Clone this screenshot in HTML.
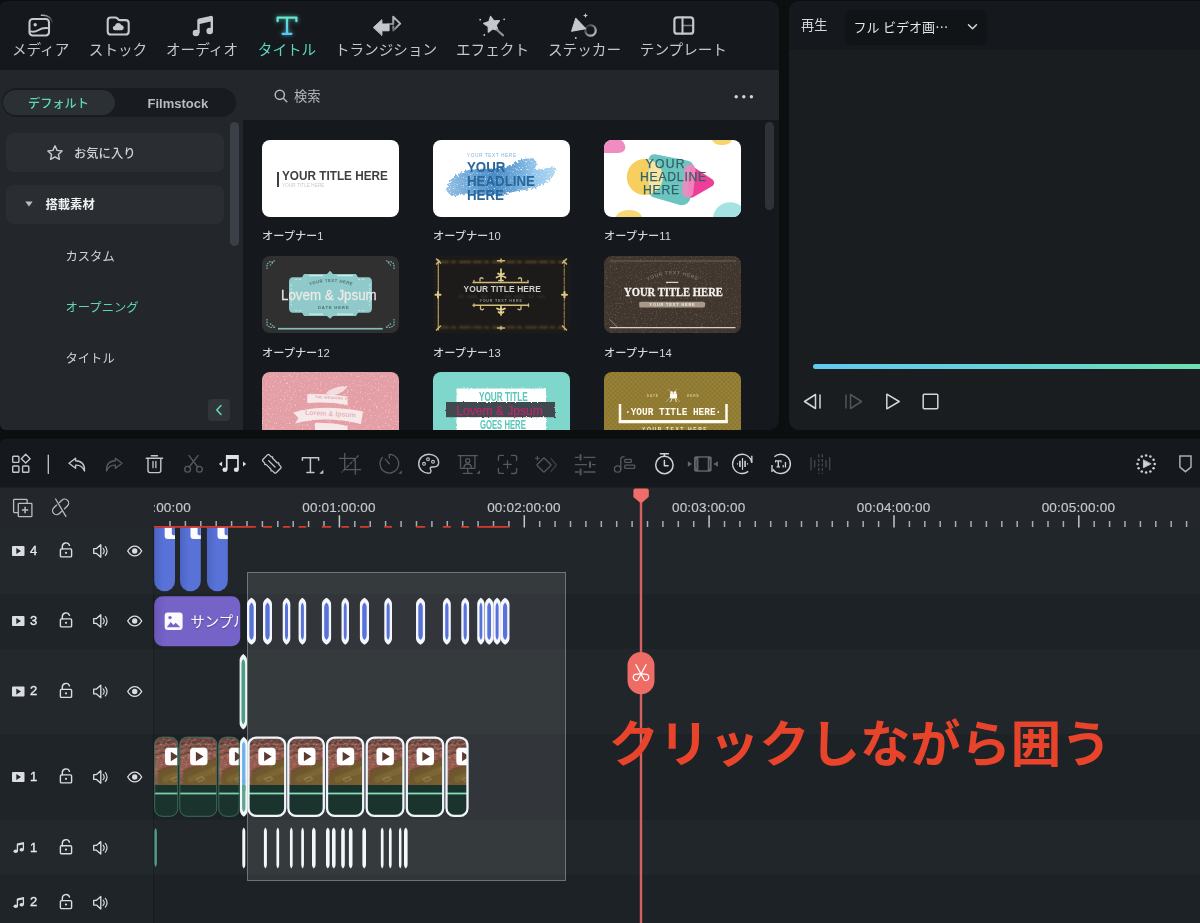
<!DOCTYPE html>
<html lang="ja">
<head>
<meta charset="utf-8">
<title>Filmora</title>
<style>
*{box-sizing:border-box;margin:0;padding:0}
html,body{width:1200px;height:923px;overflow:hidden;background:#0c0e10}
body{position:relative;font-family:"Liberation Sans","Noto Sans CJK JP",sans-serif;color:#c9cbce;-webkit-font-smoothing:antialiased}
.abs{position:absolute}
svg{position:absolute;overflow:visible}
/* ---------- top-left panel ---------- */
#lib{will-change:transform;position:absolute;left:0;top:1px;width:779px;height:429px;background:#15181c;border-radius:6px 10px 10px 6px;overflow:hidden}
#tabs{position:absolute;left:0;top:0;width:779px;height:68.5px;background:#15181c}
.tab{position:absolute;top:40px;height:18px;line-height:18px;font-size:14.6px;color:#c6c8cc;white-space:nowrap;transform:translateX(-50%)}
.tab.on{color:#5fd6c0}
#strip{position:absolute;left:0;top:68.5px;width:779px;height:50.5px;background:#23272b}
#side{position:absolute;left:0;top:119px;width:243px;height:310px;background:#23272b}
#seg{position:absolute;left:2px;top:87px;width:234px;height:29px;border-radius:15px;background:#181b1f}
#segon{position:absolute;left:3px;top:89px;width:112px;height:25px;border-radius:13px;background:#2b3035}
.sbtn{position:absolute;left:6px;width:218px;height:39px;border-radius:8px;background:#2a2e33}
.stext{position:absolute;font-size:12.3px;line-height:16px;height:16px;white-space:nowrap}
.lbl{position:absolute;font-weight:500;font-size:11.2px;line-height:14px;height:14px;color:#d4d6d9;white-space:nowrap}
.th{position:absolute;width:137px;height:77px;border-radius:8px;overflow:hidden}
/* ---------- preview panel ---------- */
#prev{will-change:transform;position:absolute;left:789px;top:1px;width:420px;height:429px;background:#1a1d20;border-radius:10px;overflow:hidden}
#prevhead{position:absolute;left:0;top:0;width:420px;height:49px;background:#15181c}
/* ---------- toolbar ---------- */
#tool{will-change:transform;position:absolute;left:0;top:438px;width:1200px;height:50px}
/* ---------- timeline ---------- */
#tl{will-change:transform;position:absolute;left:0;top:487px;width:1200px;height:436px;background:#23272b;overflow:hidden}
.row{position:absolute;left:0;width:1200px}
.rl{background:#22282b}.rd{background:#1f2428}
.tnum{position:absolute;left:30px;font-size:13px;line-height:16px;height:16px;color:#e8e9ea;font-weight:normal;-webkit-text-stroke:.35px #e8e9ea}
.rul{position:absolute;top:12.600px;font-size:13.500px;line-height:16px;height:16px;color:#c6c9cd;white-space:nowrap;letter-spacing:.2px;transform:translateX(-50%);-webkit-text-stroke:.15px #c6c9cd}
</style>
</head>
<body>

<!-- ================= LIBRARY PANEL ================= -->
<div id="lib">
  <div id="tabs">
    <div class="tab" style="left:40.6px">メディア</div>
    <div class="tab" style="left:118px">ストック</div>
    <div class="tab" style="left:202px">オーディオ</div>
    <div class="tab on" style="left:287px">タイトル</div>
    <div class="tab" style="left:386px">トランジション</div>
    <div class="tab" style="left:492.5px">エフェクト</div>
    <div class="tab" style="left:584.5px">ステッカー</div>
    <div class="tab" style="left:683.4px">テンプレート</div>
    <!--TI-START-->
<svg style="left:0;top:0" width="779" height="69" viewBox="0 1 779 69" fill="none" stroke-linecap="round" stroke-linejoin="round">
<defs>
<linearGradient id="tg" x1="0" y1="0" x2="0" y2="1"><stop offset="0" stop-color="#62e6cc"/><stop offset="1" stop-color="#5cc4fa"/></linearGradient>
<linearGradient id="fa1" x1="1" y1="0" x2="0" y2="1"><stop offset="0" stop-color="#c6c8ce"/><stop offset=".55" stop-color="#c6c8ce" stop-opacity=".75"/><stop offset="1" stop-color="#c6c8ce" stop-opacity=".15"/></linearGradient>
<linearGradient id="fa2" x1="1" y1="1" x2="0" y2="0"><stop offset="0" stop-color="#c6c8ce"/><stop offset=".5" stop-color="#c6c8ce" stop-opacity=".6"/><stop offset="1" stop-color="#c6c8ce" stop-opacity=".05"/></linearGradient>
<linearGradient id="fa3" x1="0" y1="0" x2="1" y2="1"><stop offset="0" stop-color="#c6c8ce" stop-opacity=".9"/><stop offset="1" stop-color="#c6c8ce" stop-opacity="0"/></linearGradient>
<filter id="glow" x="-50%" y="-50%" width="200%" height="200%"><feGaussianBlur stdDeviation="2.200"/></filter>
</defs>
<rect x="29.500" y="19" width="19.500" height="16.500" rx="3.200" stroke="#c6c8ce" stroke-width="2.100"/>
<circle cx="35.200" cy="24.700" r="1.700" fill="#c6c8ce"/>
<path d="M30.500 31.400c3.400.9 5.400.3 7.700-1.200 2.600-1.700 5.400-2.700 10-2.100" stroke="#c6c8ce" stroke-width="1.900"/>
<path d="M41.500 15.300c5.600-.6 10.700 2.200 11 9.300" stroke="url(#fa3)" stroke-width="1.600"/>
<path d="M110.800 17.500h4.300c1.100 0 1.700.3 2.400 1l.9.900c.5.500 1 .7 1.800.7h5.400c1.900 0 3.100 1.200 3.100 3.100v8.200c0 1.900-1.200 3.100-3.100 3.100h-14.800c-1.900 0-3.100-1.200-3.100-3.100V20.600c0-1.900 1.200-3.100 3.100-3.100z" stroke="#c6c8ce" stroke-width="2.100"/>
<path d="M115.200 30.300a2.300 2.300 0 0 1-.2-4.600 3.300 3.300 0 0 1 6.300-.7 2.700 2.700 0 0 1 .5 5.300z" fill="#c6c8ce"/>
<g fill="#c6c8ce"><circle cx="196" cy="33" r="3.300"/><circle cx="209.700" cy="31" r="3.300"/><path d="M197.300 20.500c0-1.100.6-1.900 1.700-2.100l11.600-2.500c1.300-.3 2.400.6 2.400 1.900V31h-2.400V21.600l-10.900 2.400V33h-2.400z"/></g>
<path d="M277.600 21.200v-3.600h18.800v3.600M287 17.600v16.100M282.600 33.800h8.800" stroke="#5fe0d8" stroke-width="3" filter="url(#glow)" opacity=".55"/>
<path d="M277.600 21.200v-3.600h18.800v3.600M287 17.600v16.100M282.600 33.800h8.800" stroke="url(#tg)" stroke-width="2.300"/>
<path d="M373.600 27.300l8.300-7.600v4.300h7.200v6.800h-7.200v4.300z" fill="#c6c8ce" stroke="#c6c8ce" stroke-width="1" />
<path d="M388.500 24l4.700 0v-7.300l7 6.900-7 6.900v-4" stroke="url(#fa1)" stroke-width="2"/>
<path d="M490.54 16.33L493.88 20.74L499.42 20.66L496.26 25.20L498.04 30.44L492.75 28.83L488.32 32.15L488.20 26.62L483.68 23.43L488.91 21.61z" fill="#c6c8ce" stroke="#c6c8ce" stroke-width="1.200"/>
<path d="M496.800 29.800l6.300 5.600" stroke="#8f9298" stroke-width="2.100"/>
<g fill="#c6c8ce"><circle cx="480.200" cy="19.700" r=".9"/><circle cx="504.200" cy="19.300" r=".9"/><circle cx="484.300" cy="35" r=".9"/></g>
<path d="M575.800 18.400l-4.100 12.800 13.900-2.500z" fill="#c6c8ce" stroke="#c6c8ce" stroke-width="1.200"/>
<circle cx="590.500" cy="30.400" r="5.200" stroke="url(#fa2)" stroke-width="2.300"/>
<path d="M585.500 13l.7 1.800 1.800.7-1.800.7-.7 1.800-.7-1.800-1.800-.7 1.800-.7z" fill="#c6c8ce"/><circle cx="575.800" cy="38" r=".9" fill="#c6c8ce"/>
<rect x="674.400" y="17.400" width="18.800" height="16.300" rx="2.800" stroke="#c6c8ce" stroke-width="2.200"/><path d="M682.500 17.400v16.300" stroke="#c6c8ce" stroke-width="2"/><path d="M682.500 25.500h10.700" stroke="#c6c8ce" stroke-width="1.600" opacity=".6"/>
</svg>
<!--TI-END-->
  </div>
  <div id="strip"></div>
  <div id="side"></div>
  <div id="seg"></div><div id="segon"></div>
  <div class="stext" style="left:28px;top:95px;color:#5fd6b4;font-weight:500;font-size:12.2px">デフォルト</div>
  <div class="stext" style="left:147.5px;top:95px;color:#b9bcc0;font-weight:bold;font-size:13px">Filmstock</div>
  <div class="stext" style="left:294px;top:87.5px;color:#b4b7bb;font-size:13.3px">検索</div>
  
  <!-- search icon -->
  <svg style="left:274px;top:88px" width="14" height="14" viewBox="0 0 14 14" fill="none" stroke="#b4b7bb" stroke-width="1.5" stroke-linecap="round"><circle cx="5.8" cy="5.8" r="4.6"/><path d="M9.3 9.3L12.8 12.8"/></svg>
  <!-- more dots -->
  <svg style="left:733px;top:92px" width="22" height="8" viewBox="0 0 22 8" fill="#d2d4d7"><circle cx="3.2" cy="3.8" r="1.7"/><circle cx="10.8" cy="3.8" r="1.7"/><circle cx="18.4" cy="3.8" r="1.7"/></svg>
  <!-- sidebar scroll -->
  <div class="abs" style="left:230px;top:121px;width:9px;height:124px;border-radius:5px;background:#3b4048"></div>
  <div class="sbtn" style="top:132px"></div>
  <svg style="left:46px;top:143px" width="18" height="18" viewBox="0 0 18 18" fill="none" stroke="#c9cbce" stroke-width="1.4" stroke-linejoin="round"><path d="M9 1.8l2.1 4.6 5 .6-3.7 3.4 1 4.9L9 12.8l-4.4 2.5 1-4.9L1.9 7l5-.6z"/></svg>
  <div class="stext" style="left:74px;top:145px;color:#cfd1d4;font-weight:500">お気に入り</div>
  <div class="sbtn" style="top:184px"></div>
  <svg style="left:25px;top:200px" width="8" height="6" viewBox="0 0 8 6" fill="#b9bcc0"><path d="M0.3 0.5h7.4L4 5.6z"/></svg>
  <div class="stext" style="left:45.5px;top:196px;color:#f0f1f2;font-weight:bold">搭載素材</div>
  <div class="stext" style="left:65.5px;top:248px;color:#d0d2d5">カスタム</div>
  <div class="stext" style="left:65.5px;top:299px;color:#5fd6b4">オープニング</div>
  <div class="stext" style="left:65.5px;top:350px;color:#d0d2d5">タイトル</div>
  <div class="abs" style="left:208px;top:398px;width:22px;height:22px;border-radius:4px;background:#30353a"></div>
  <svg style="left:214px;top:403px" width="10" height="12" viewBox="0 0 10 12" fill="none" stroke="#5fd6b4" stroke-width="1.6" stroke-linecap="round" stroke-linejoin="round"><path d="M7 1.5L2.8 6 7 10.5"/></svg>
  <!-- content scroll -->
  <div class="abs" style="left:765px;top:121px;width:9px;height:88px;border-radius:5px;background:#2f3338"></div>
  <!--SIDEBAR-->
  
  <!-- ===== row 1 ===== -->
  <div class="th" style="left:262px;top:138.5px;background:#fff">
    <div class="abs" style="left:15px;top:32px;width:2px;height:15px;background:#3e3e3e"></div>
    <div class="abs" id="t1a" style="left:20px;top:28px;font-size:13.4px;line-height:16px;font-weight:bold;color:#3f3f3f;white-space:nowrap;transform-origin:0 0;transform:scaleX(.879)">YOUR TITLE HERE</div>
    <div class="abs" style="left:20px;top:43.5px;font-size:4.6px;line-height:6px;color:#c9c9c9;white-space:nowrap;letter-spacing:.1px">YOUR TITLE HERE</div>
  </div>
  <div class="lbl" style="left:262px;top:228px">オープナー1</div>

  <div class="th" style="left:433px;top:138.5px;background:#fff">
    <svg style="left:0;top:0" width="137" height="77" viewBox="0 0 137 77">
      <defs><linearGradient id="br" gradientUnits="userSpaceOnUse" x1="14" y1="0" x2="124" y2="0"><stop offset="0" stop-color="#93c0e4"/><stop offset=".22" stop-color="#6da6d6"/><stop offset=".42" stop-color="#4a8cc6"/><stop offset=".62" stop-color="#6aa6d8"/><stop offset=".8" stop-color="#94c6ec"/><stop offset="1" stop-color="#b4d8f2"/></linearGradient>
      <filter id="rg" x="-5%" y="-10%" width="110%" height="120%"><feTurbulence type="fractalNoise" baseFrequency=".5" numOctaves="2" seed="3" result="n"/><feDisplacementMap in="SourceGraphic" in2="n" scale="4.500" result="d"/><feTurbulence type="fractalNoise" baseFrequency=".75" numOctaves="2" seed="12" result="m"/><feColorMatrix in="m" values="0 0 0 0 0 0 0 0 0 0 0 0 0 0 0 0 0 0 4.500 -2.850" result="h"/><feComposite in="d" in2="h" operator="out"/></filter></defs>
      <path filter="url(#rg)" fill="url(#br)" d="M14 48c1-5 3-8 7-11 4-4 9-6 15-7 6-1 12-1 19-1.500 6 0 12-.5 17-1.500 5-1 9-4 13.600-6 4-2 9-3 13.400-2.700 3 1 4.600 2.700 4.600 4.700 0 2.300-1.600 4.600-1.600 6.600 3 .5 7-.5 10-1.100 3-.6 7-1 11-1.500-.5 4-1.500 7.600-4 10.600-4 4-9 7-14.400 9.400-6 2-13 3-20 4-6 1-11 3-16 4-6 .5-13 0-19.600-.5-5-.5-10-.4-15-.9-4-.3-9 2.600-13.400 2.700-4-.9-7-4.300-7.600-8.300z"/>
    </svg>
    <div class="abs" style="left:34px;top:13.5px;font-size:4.8px;line-height:6px;color:#86b4dc;white-space:nowrap;letter-spacing:.55px">YOUR TEXT HERE</div>
    <div class="abs" style="left:34px;top:20.5px;font-size:14px;line-height:14px;font-weight:bold;color:#27679c;white-space:nowrap;transform-origin:0 0;transform:scaleX(.95)">YOUR<br>HEADLINE<br>HERE</div>
  </div>
  <div class="lbl" style="left:433px;top:228px">オープナー10</div>

  <div class="th" style="left:604px;top:138.5px;background:#fff">
    <svg style="left:0;top:0" width="137" height="77" viewBox="0 0 137 77">
      <path fill="#f08cc0" d="M0 0h17c3 2 5 6 4 9-1 3-4 4-8 4H0z"/>
      <path fill="#f7d56e" d="M108 0h20c-1 3-5 5-10 5s-9-2-10-5z"/>
      <path fill="#f7d872" d="M12 77c1-4 6-7 13-7s12 3 13 7z"/>
      <path fill="#a5e3e3" d="M109 77c1-6 5-12 12-14 6-2 12 0 16 3v11z"/>
      <circle cx="40.800" cy="37" r="18" fill="#f6cf5e"/>
      <clipPath id="tb"><path d="M51 14.300L83 20.500Q90 22 90.500 29L86.500 58Q84.500 66 76 65L50 57.500Q44.500 55.500 44.500 49V22Q44.500 13.500 51 14.300z"/></clipPath>
      <path fill="#6cc4c0" d="M51 14.300L83 20.500Q90 22 90.500 29L86.500 58Q84.500 66 76 65L50 57.500Q44.500 55.500 44.500 49V22Q44.500 13.500 51 14.300z"/>
      <circle cx="40.800" cy="37" r="18" fill="#f7e3a2" clip-path="url(#tb)"/>
      <path fill="#ee3f98" d="M90 27.300L108.500 39.500Q112 43 108.500 46L89.500 57Q85.500 59 84.500 55Q82.500 41 85.500 29.500Q87 25.500 90 27.300z"/>
      <rect x="79" y="24.500" width="11.500" height="33" rx="5.500" fill="#f08cc0" opacity=".88" transform="rotate(6 85 41)"/>
    </svg>
    <div class="abs" style="left:36px;top:18.5px;font-size:12.2px;line-height:13px;color:#2f6365;-webkit-text-stroke:.25px #2f6365;white-space:nowrap;letter-spacing:.75px"><span style="margin-left:5.500px;letter-spacing:1.300px">YOUR</span><br>HEADLINE<br><span style="margin-left:3px">HERE</span></div>
  </div>
  <div class="lbl" style="left:604px;top:228px">オープナー11</div>

  <!-- ===== row 2 ===== -->
  <div class="th" style="left:262px;top:254.8px;background:#303030">
    <svg style="left:0;top:0" width="137" height="77" viewBox="0 0 137 77">
      <defs><filter id="pl" x="-5%" y="-5%" width="110%" height="110%"><feTurbulence type="fractalNoise" baseFrequency=".9" numOctaves="1" seed="2"/><feDisplacementMap in="SourceGraphic" scale="1.300"/></filter></defs>
      <path filter="url(#pl)" fill="#8fc9c9" d="M68 14.700L71 18H94L96 21.300H106Q110 21.300 110 26V52Q110 56.700 106 56.700H96L94 60H71L68 62.700 65 60H42L40 56.700H31Q27 56.700 27 52V26Q27 21.300 31 21.300H40L42 18H65z"/>
      <path stroke="#c9eded" stroke-width="1.200" fill="none" d="M47 19.700H61M75 19.700H91M47 58.200H61M75 58.200H91"/>
      <path stroke="#c2e8e8" stroke-width="1" stroke-dasharray="2.500 1.500" fill="none" d="M29.200 28V50M107.800 28V50M33 23.300H40M96 23.300H104M33 54.700H40M96 54.700H104"/>
      <path stroke="#9fd3d3" stroke-width="1" d="M16 72.400H120.700"/><path stroke="#6fa3a3" stroke-width=".9" d="M16 73.300H120.700"/>
      <g fill="none" stroke="#7fbcbc" stroke-width="1.100" stroke-dasharray="1.600 1"><path d="M5 13V8l3-2.500 4 1M8 9.500l5-5.500M132 13V8l-3-2.500-4 1M129 9.500l-5-5.500M5 63v6l3 2.500 5-.5M8 67.500l5 4M132 63v6l-3 2.500-5-.5M129 67.500l-5 4"/></g>
      <path id="arc12" fill="none" d="M46.500 30Q69 21.600 92.500 30.400"/>
      <text font-size="4.300" font-weight="bold" fill="#4d7474" letter-spacing=".42" font-family="Liberation Sans,sans-serif"><textPath href="#arc12" startOffset="1.200">YOUR TEXT HERE</textPath></text>
    </svg>
    <div class="abs" style="left:19px;top:30.200px;font-size:14.6px;line-height:18px;color:rgba(240,236,232,.93);white-space:nowrap;letter-spacing:0;transform-origin:0 0;transform:scaleX(.915);-webkit-text-stroke:.3px rgba(240,236,232,.9)">Lovem &amp; Jpsum</div>
    <div class="abs" style="left:56px;top:49.700px;font-size:4.300px;line-height:6px;color:#4d7474;white-space:nowrap;letter-spacing:.75px;font-weight:bold">DATE HERE</div>
  </div>
  <div class="lbl" style="left:262px;top:345px">オープナー12</div>

  <div class="th" style="left:433px;top:254.8px;background:#1d1b19">
    <svg style="left:0;top:0" width="137" height="77" viewBox="0 0 137 77">
      <defs><filter id="gd" filterUnits="userSpaceOnUse" x="0" y="0" width="137" height="77"><feTurbulence type="fractalNoise" baseFrequency=".9" numOctaves="1" seed="8"/><feDisplacementMap in="SourceGraphic" scale="1.500"/></filter>
      <filter id="gb2" filterUnits="userSpaceOnUse" x="0" y="0" width="137" height="77"><feGaussianBlur stdDeviation=".8"/></filter></defs>
      <g fill="none" filter="url(#gb2)" stroke="#5a4a2a" stroke-width="1.800" stroke-dasharray="9 2 5 3 12 2"><path d="M7 6H130M7 71.300H130"/></g>
      <path d="M25 40.600H58M72 40.600H112" stroke="#3a352c" stroke-width="1.300" filter="url(#gb2)" stroke-dasharray="6 3 10 4"/>
      <g filter="url(#gd)" fill="none" stroke-linecap="round">
        <path stroke="#a8955a" stroke-width="1.300" stroke-dasharray="5 1 2 1" d="M5.300 4V74"/>
        <path stroke="#8a7a4a" stroke-width="1.200" stroke-dasharray="4 1 2 1.500" d="M131.300 4V74"/>
        <path stroke="#d2bd7a" stroke-width="1.400" d="M40 26.500H95M40 49.300H95.500"/>
        <path stroke="#e2d08e" stroke-width="1.700" d="M68 13v4M65 17.500q3 2.500 6 0M63.500 21.500q4.500-3 9 0M66 24.500h4M68 17v8M68 50v9M64 52.500q4 2.500 8 0M65.500 56q2.500 2 5 0"/>
        <path stroke="#cdb977" stroke-width="1.300" d="M47 25v-2.500q1.500-1.500 3 0M88.500 25v-2.500q-1.500-1.500-3 0M47.500 50.500v2.500q1.500 1.500 3 0M88 50.500v2.500q-1.500 1.500-3 0M41 24.500v2M95 24.500v2M41 48v2.500M95.500 48v2.500"/>
        <path stroke="#dcc985" stroke-width="2" d="M2.500 38.700h5M5 36v5.500M129 38.700h5M131.500 36v5.500"/>
        <path stroke="#cdb977" stroke-width="1.500" d="M3.500 3l4 4M3.500 8l3-3M133.500 3l-4 4M133.500 8l-3-3M3.500 74l4-4M133.500 74l-4-4M64.500 4.700h7M68 3v3M64.500 72h7M68 70.500v3"/>
      </g>
    </svg>
    <div class="abs" style="left:30.500px;top:28px;font-size:8.400px;line-height:11px;font-weight:bold;color:#cfcfcf;white-space:nowrap;letter-spacing:.14px">YOUR TITLE HERE</div>
    <div class="abs" style="left:46.400px;top:42.400px;font-size:3.700px;line-height:6px;color:#8c8c86;white-space:nowrap;letter-spacing:.78px;font-weight:bold">YOUR TEXT HERE</div>
  </div>
  <div class="lbl" style="left:433px;top:345px">オープナー13</div>

  <div class="th" style="left:604px;top:254.8px;background:#41362d">
    <svg style="left:0;top:0" width="137" height="77" viewBox="0 0 137 77">
      <defs><filter id="sp" x="0" y="0" width="1" height="1"><feTurbulence type="fractalNoise" baseFrequency=".8" numOctaves="2" seed="5"/><feColorMatrix values="0 0 0 0 .62  0 0 0 0 .55  0 0 0 0 .48  0 0 0 3.200 -1.820"/></filter></defs>
      <rect width="137" height="77" filter="url(#sp)" opacity=".3"/>
      <path stroke="#7a6d62" stroke-width=".8" d="M5.600 5H132"/>
      <path stroke="#d6cec5" stroke-width="1.300" d="M5.600 71.700H131.500"/><path stroke="#9c9187" stroke-width=".9" d="M5.600 63.300l8 8"/>
      <path stroke="#d9d0c6" stroke-width="1.300" d="M61.900 26.300h12.400"/>
      <rect x="35.200" y="45.700" width="65.800" height="5.900" rx="1.600" fill="#a8988a"/>
      <path id="arc14" fill="none" d="M41.500 26q27.500-15 55 0"/>
      <text font-size="5" font-weight="bold" fill="#7d6e60" letter-spacing=".62" font-family="Liberation Sans,sans-serif"><textPath href="#arc14" startOffset="2">YOUR TEXT HERE</textPath></text>
    </svg>
    <div class="abs" style="left:20.300px;top:28.700px;font-family:'Liberation Serif',serif;font-size:13.400px;line-height:16px;font-weight:bold;color:#f6f3ee;white-space:nowrap;transform-origin:0 0;transform:scaleX(.793);-webkit-text-stroke:.3px #f6f3ee">YOUR TITLE HERE</div>
    <div class="abs" style="left:45.600px;top:46.900px;font-size:3.800px;line-height:5.500px;color:#f0eae2;white-space:nowrap;letter-spacing:.9px;font-weight:bold">YOUR TEXT HERE</div>
  </div>
  <div class="lbl" style="left:604px;top:345px">オープナー14</div>

  <!-- ===== row 3 ===== -->
  <div class="th" style="left:262px;top:370.9px;background:#e39fa5">
    <svg style="left:0;top:0" width="137" height="77" viewBox="0 0 137 77">
      <defs><filter id="sp2" x="0" y="0" width="1" height="1"><feTurbulence type="fractalNoise" baseFrequency=".55" numOctaves="2" seed="11"/><feColorMatrix values="0 0 0 0 1  0 0 0 0 .93  0 0 0 0 .93  0 0 0 3.500 -2.080"/></filter>
      <filter id="rg3" filterUnits="userSpaceOnUse" x="0" y="0" width="137" height="77"><feTurbulence type="fractalNoise" baseFrequency=".7" numOctaves="2" seed="4"/><feDisplacementMap in="SourceGraphic" scale="1.800"/></filter></defs>
      <rect width="137" height="77" filter="url(#sp2)" opacity=".6"/>
      <g filter="url(#rg3)" fill="#f7e8e9">
        <path d="M64 21.500c4-5 12-7.500 21.500-7.500-2 4-6 7-11 8.500-4 1-8 .5-10.500-1z" opacity=".85"/>
        <path d="M45.300 22.300Q66 21 85.600 24.500V33Q66 29.500 45.300 31z"/>
        <path d="M31.200 40.500Q60 31.500 101 39.500L99 52Q62 43.500 33 51.500L36.500 46z"/>
        <path d="M53 50.800Q70 50.500 85.600 54V62.500Q70 59 53 59.300z"/>
      </g>
    </svg>
    <div class="abs" style="left:53px;top:24.200px;font-size:3.500px;line-height:5px;color:#dba0a6;white-space:nowrap;letter-spacing:.32px;font-weight:bold;transform:rotate(3deg)">THE WEDDING OF</div>
    <div class="abs" style="left:43px;top:36.700px;font-size:7px;line-height:9px;color:#e6b4b9;white-space:nowrap;font-weight:bold;transform:rotate(3deg)">Lorem &amp; Ipsum</div>
  </div>

  <div class="th" style="left:433px;top:370.9px;background:#7fd6ca">
    <svg style="left:0;top:0" width="137" height="77" viewBox="0 0 137 77">
      <defs><filter id="rg2" filterUnits="userSpaceOnUse" x="0" y="0" width="137" height="77"><feTurbulence type="fractalNoise" baseFrequency=".6" numOctaves="2" seed="6"/><feDisplacementMap in="SourceGraphic" scale="2.600"/></filter>
      <pattern id="dots" width="2" height="2" patternUnits="userSpaceOnUse"><rect width="2" height="2" fill="#3c464c"/><circle cx="1" cy="1" r=".45" fill="#5b666c"/></pattern></defs>
      <g filter="url(#rg2)"><rect x="23.500" y="16.500" width="89.500" height="14" fill="#fdfefe"/><rect x="23.500" y="45" width="89.500" height="16" fill="#fdfefe"/><rect x="13" y="30" width="109" height="15.200" fill="url(#dots)"/></g>
    </svg>
    <div class="abs" style="left:45.900px;top:18.300px;font-size:13px;line-height:14px;font-weight:bold;color:#58c6b8;white-space:nowrap;transform-origin:0 0;transform:scaleX(.632)">YOUR TITLE</div>
    <div class="abs" style="left:23.200px;top:32.900px;font-size:12.100px;line-height:13px;color:#b7286c;white-space:nowrap;-webkit-text-stroke:.25px #b7286c">Lovem &amp; Jpsum</div>
    <div class="abs" style="left:46.800px;top:46.400px;font-size:13px;line-height:14px;font-weight:bold;color:#58c6b8;white-space:nowrap;transform-origin:0 0;transform:scaleX(.592)">GOES HERE</div>
  </div>

  <div class="th" style="left:604px;top:370.9px;background:#8b7631">
    <svg style="left:0;top:0" width="137" height="77" viewBox="0 0 137 77">
      <defs><pattern id="xh" width="3.200" height="3.200" patternUnits="userSpaceOnUse" patternTransform="rotate(45)"><path d="M0 .6H3.200M.6 0V3.200" stroke="#b39a42" stroke-width=".75" opacity=".55"/></pattern>
      <radialGradient id="xm" cx=".5" cy=".45" r=".75"><stop offset="0" stop-color="#fff" stop-opacity=".55"/><stop offset="1" stop-color="#fff" stop-opacity="1"/></radialGradient><mask id="xmk"><rect width="137" height="77" fill="url(#xm)"/></mask></defs>
      <rect width="137" height="77" fill="url(#xh)" mask="url(#xmk)"/>
      <g fill="none" stroke="#fdfbf2">
        <path stroke-width="2.500" d="M16 31.900V50.500M122.500 31.900V50.500"/>
        <path stroke-width="3.400" d="M14.750 49.600H123.750"/>
        <path stroke-width=".6" d="M62 30l11-13M64 17l12 13" opacity=".6"/>
      </g>
      <rect x="66" y="21.500" width="7" height="5" rx=".8" fill="#fdfbf2"/><circle cx="67.600" cy="20.600" r="1.300" fill="#fdfbf2"/><circle cx="71" cy="20.600" r="1.300" fill="#fdfbf2"/><path stroke="#fdfbf2" stroke-width=".8" d="M68 26.500l-1.500 3.500M71 26.500l1.500 3.500"/>
    </svg>
    <div class="abs" style="left:42.800px;top:22.500px;font-size:3.200px;line-height:5px;color:#d9c88c;white-space:nowrap;letter-spacing:.9px;font-weight:bold">DATE</div>
    <div class="abs" style="left:83px;top:22.500px;font-size:3.200px;line-height:5px;color:#d9c88c;white-space:nowrap;letter-spacing:.9px;font-weight:bold">HERE</div>
    <div class="abs" style="left:20.800px;top:33.600px;font-family:'Liberation Mono',monospace;font-size:11.800px;line-height:14px;font-weight:bold;color:#fdfbf2;white-space:nowrap;transform-origin:0 0;transform:scaleX(.8)">·YOUR TITLE HERE·</div>
    <div class="abs" style="left:38px;top:54.500px;font-size:5px;line-height:7px;color:#efe6c2;white-space:nowrap;letter-spacing:1.600px;font-weight:bold">YOUR TEXT HERE</div>
  </div>
  <!--THUMBS-->
</div>

<!-- ================= PREVIEW PANEL ================= -->
<div id="prev">
  <div id="prevhead"></div>
  
  <div class="abs" style="left:12px;top:16px;font-size:13.2px;line-height:18px;color:#d6d8db;white-space:nowrap">再生</div>
  <div class="abs" style="left:56px;top:9px;width:142px;height:35px;border-radius:7px;background:#111417"></div>
  <div class="abs" style="left:64.5px;top:17px;font-size:13px;line-height:18px;color:#e6e7e9;white-space:nowrap">フル ビデオ画<span style="font-family:'Noto Sans CJK JP',sans-serif">…</span></div>
  <svg style="left:178px;top:22px" width="11" height="8" viewBox="0 0 11 8" fill="none" stroke="#d6d8db" stroke-width="1.500" stroke-linecap="round" stroke-linejoin="round"><path d="M1.500 1.800L5.500 5.800 9.500 1.800"/></svg>
  <div class="abs" style="left:24px;top:363px;width:400px;height:4.500px;border-radius:3px;background:linear-gradient(90deg,#62c8f2 0,#66d4d4 55%,#70e0b0 100%)"></div>
  <!-- playback controls -->
  <svg style="left:14px;top:391px" width="20" height="19" viewBox="0 0 20 19" fill="none" stroke="#d3d5d8" stroke-width="1.500" stroke-linejoin="round" stroke-linecap="round"><path d="M12.500 2.500v14L1.500 9.500z"/><path d="M17 3v13"/></svg>
  <svg style="left:54px;top:391px" width="20" height="19" viewBox="0 0 20 19" fill="none" stroke="#4f545a" stroke-width="1.500" stroke-linejoin="round" stroke-linecap="round"><path d="M7.500 2.500v14l11-7z"/><path d="M3 3v13"/></svg>
  <svg style="left:96px;top:391px" width="16" height="19" viewBox="0 0 16 19" fill="none" stroke="#d3d5d8" stroke-width="1.500" stroke-linejoin="round"><path d="M1.800 2.200v14.600L14.200 9.500z"/></svg>
  <svg style="left:133px;top:392px" width="17" height="17" viewBox="0 0 17 17" fill="none" stroke="#d3d5d8" stroke-width="1.500" stroke-linejoin="round"><rect x="1.200" y="1.200" width="14.600" height="14.600" rx="1"/></svg>
  <!--PREVIEW-->
</div>

<!-- ================= TOOLBAR ================= -->
<div id="tool">
  <!--TB-START-->
<svg style="left:0;top:0" width="1200" height="50" viewBox="0 438 1200 50" fill="none" stroke-linecap="round" stroke-linejoin="round">
<path d="M0 488V444.200a5.500 5.500 0 0 1 5.500-5.500H1200V488z" fill="#15181c"/>
<g stroke="#c3c6ca" stroke-width="1.400"><rect x="12.700" y="456.200" width="6.200" height="6.200" rx=".8"/><rect x="12.700" y="466" width="6.200" height="6.200" rx=".8"/><rect x="22.600" y="466" width="6.200" height="6.200" rx=".8"/><path d="M25.700 454.300l4.400 4.400-4.400 4.400-4.400-4.400z"/></g>
<path d="M48.300 455.200V473.400" stroke="#c3c6ca" stroke-width="1.300"/>
<path d="M75.600 458.300l-6.600 5 6.600 5v-3.100c4.200-.3 7 1.600 8.900 5.700.3-6.400-2.600-9.900-8.900-10.100z" stroke="#c3c6ca" stroke-width="1.400"/>
<path d="M115.400 458.300l6.600 5-6.600 5v-3.100c-4.200-.3-7 1.600-8.900 5.700-.3-6.400 2.600-9.900 8.900-10.100z" stroke="#565a60" stroke-width="1.400"/>
<g stroke="#c3c6ca" stroke-width="1.400"><path d="M146.200 458.200h16.400M151.300 455.800h6.200M148 458.400v12.200a2 2 0 0 0 2 2h8.800a2 2 0 0 0 2-2V458.400"/><path d="M153 461.500v6.200M155.900 461.500v6.200" stroke-width="1.300"/></g>
<g stroke="#565a60" stroke-width="1.300"><circle cx="187.600" cy="469.200" r="2.900"/><circle cx="199.400" cy="469.200" r="2.900"/><path d="M188.800 455.400L197.800 467M198.200 455.400L189.200 467"/></g>
<g fill="#dfe1e4" stroke="none"><path d="M225.900 455h12.900v14.600h-1.700V459h-9.500v10.600h-1.700z"/><ellipse cx="224.900" cy="469.700" rx="2.500" ry="2.300"/><ellipse cx="236.300" cy="469.700" rx="2.500" ry="2.300"/><path d="M218.900 464l3.200-2.500v5zM246.200 464l-3.200-2.500v5z"/></g>
<g stroke="#c3c6ca" stroke-width="1.300" transform="rotate(45 271.800 463.800)"><path d="M263.700 459.300h2.600l1.100-1 1.100 1h6.600l1.100-1 1.100 1h2.600a1.300 1.300 0 0 1 1.300 1.300v6.400a1.300 1.300 0 0 1-1.300 1.300h-2.600l-1.100 1-1.100-1h-6.600l-1.100 1-1.100-1h-2.600a1.300 1.300 0 0 1-1.300-1.300v-6.400a1.300 1.300 0 0 1 1.300-1.300z"/><path d="M267.300 463.800h9"/></g>
<g stroke="#c3c6ca" stroke-width="1.500"><path d="M302.400 460.300v-2.500h16.200v2.500M310.400 457.800v14.600M306.900 472.400h7"/></g><path d="M323.300 469.800v4h-4z" fill="#c3c6ca"/>
<g stroke="#565a60" stroke-width="1.300"><path d="M344.700 453.400v16.300h16M339.400 458.300h15.900v16"/><path d="M358.400 455.600L342 472" stroke-dasharray="2.600 2"/></g>
<g stroke="#565a60" stroke-width="1.300"><path d="M389.300 454.400v3.600M389.300 454.400a9.300 9.300 0 1 1-6.900 3.100M389.300 463.700l-4-4.600"/></g><path d="M401.800 470.300v3.400h-3.400z" fill="#565a60"/>
<g stroke="#c3c6ca" stroke-width="1.400"><path d="M428.700 454.200c5.600 0 10 3.600 10 8.100 0 3.300-2.600 4.700-5.200 4.700h-1.600c-1.500 0-2.200 1.500-1.300 2.700.9 1.300.3 3.500-1.900 3.500-5.600 0-10-4.200-10-9.500s4.400-9.500 10-9.500z"/><circle cx="424" cy="463.800" r="1.400" stroke-width="1.100"/><circle cx="428" cy="459.300" r="1.400" stroke-width="1.100"/><circle cx="433" cy="461.800" r="1.400" stroke-width="1.100"/></g>
<g stroke="#565a60" stroke-width="1.300"><path d="M458.200 455.700h19M460.500 455.700v12.600h14.400V455.700M467.700 468.300v5M463.200 473.300h9"/><circle cx="467.700" cy="460.800" r="2.100"/><path d="M463.900 467.600c.4-2.400 1.900-3.600 3.800-3.600s3.400 1.200 3.800 3.600"/></g><path d="M480 470.200v3.500h-3.500z" fill="#565a60"/>
<g stroke="#565a60" stroke-width="1.300"><path d="M498.400 460.300v-3a2 2 0 0 1 2-2h3M511.600 455.400h3a2 2 0 0 1 2 2v3M516.600 468.500v3a2 2 0 0 1-2 2h-3M503.400 473.400h-3a2 2 0 0 1-2-2v-3M507.500 460.600v7.600M503.700 464.400h7.600"/></g>
<g stroke="#565a60" stroke-width="1.300"><path d="M544 458.300l6.200 6.200a.8.800 0 0 1 0 1.100L544 471.800a.8.800 0 0 1-1.100 0l-6.200-6.200a.8.800 0 0 1 0-1.100l6.200-6.200a.8.800 0 0 1 1.100 0z" transform="translate(.5 0)"/><path d="M551 458.500l5.300 6.500-5.300 6.500" stroke="#3a3e43"/><path d="M537.300 456.400v3.800M535.400 458.300h3.800" stroke-width="1.100"/></g>
<g stroke="#565a60" stroke-width="1.300"><path d="M575.400 457.300h3M584 457.300h11M575.400 464.700h11M592.300 464.700h2.700M575.400 472h3M584 472h11"/><path d="M580.500 454.900v4.800M590 462.300v4.800M580.500 469.600v4.800" stroke-width="2"/></g>
<g stroke="#565a60" stroke-width="1.300"><circle cx="617.600" cy="469" r="3.200"/><path d="M620.800 469v-9.800c0-1.900 1.300-2.600 3.300-2.600"/><rect x="624.800" y="459.400" width="6.500" height="3" rx=".6"/><rect x="624.800" y="465.100" width="9.900" height="3.200" rx=".6"/></g>
<g stroke="#d0d2d5" stroke-width="1.500"><circle cx="664.400" cy="465" r="8.700"/><path d="M660.400 453.700h8M664.400 453.700v2.600M664.400 460.600v5.100h3.700"/></g>
<rect x="694" y="456.300" width="17.700" height="15.400" rx="2" fill="#62666c"/><rect x="698.400" y="457.700" width="9.300" height="12.600" fill="#15181c"/><path d="M696.200 460v8M709.600 460v8" stroke="#3a3e43" stroke-width="1"/><path d="M687.800 461.200l4.400 2.800-4.400 2.800zM717.900 461.200l-4.400 2.800 4.400 2.800z" fill="#62666c"/>
<g stroke="#d0d2d5" stroke-width="1.400" stroke-linecap="butt"><path d="M748.24 471.36A9.6 9.6 0 1 1 751.71 462.56" /><path d="M751.81 462.86V455.700" /></g><g stroke="#d0d2d5" stroke-linecap="butt"><path d="M737.5 463.2V464.6" stroke-width="1.1"/><path d="M739.9 460.8V467.0" stroke-width="1.6"/><path d="M742.5 458.0V469.8" stroke-width="1.2"/><path d="M745.1 460.8V467.0" stroke-width="1.6"/><path d="M747.5 463.2V464.6" stroke-width="1.1"/></g>
<g stroke="#d0d2d5" stroke-width="1.400" stroke-linecap="butt"><path d="M774.38 456.77A9.6 9.6 0 1 1 772.84 469.27"/><path d="M772 472V464.900"/></g><path d="M775 460.200h6.600v2.300h-1.100v-1h-1.500v4.700h1v1.200h-3.400v-1.200h1v-4.700h-1.500v1h-1.100z" fill="#d0d2d5"/><path d="M782.600 464.900h1.200v2.500h-1.200zM784.800 462h1.300v5.400h-1.300z" fill="#d0d2d5"/>
<g stroke="#484c52" stroke-width="1.200"><path d="M811 457.700v12M829.700 457.700v12M814.700 460.300v6.700M826 460.300v6.700"/><path d="M818.700 454.300v19.400M822.300 454.300v19.400" stroke-dasharray="3 1.600" stroke-linecap="butt"/></g>
<g fill="#d0d2d6"><circle cx="1154.70" cy="464.00" r="1.250"/><circle cx="1153.55" cy="468.30" r="1.250"/><circle cx="1150.40" cy="471.45" r="1.250"/><circle cx="1146.10" cy="472.60" r="1.250"/><circle cx="1141.80" cy="471.45" r="1.250"/><circle cx="1138.65" cy="468.30" r="1.250"/><circle cx="1137.50" cy="464.00" r="1.250"/><circle cx="1138.65" cy="459.70" r="1.250"/><circle cx="1141.80" cy="456.55" r="1.250"/><circle cx="1146.10" cy="455.40" r="1.250"/><circle cx="1150.40" cy="456.55" r="1.250"/><circle cx="1153.55" cy="459.70" r="1.250"/><path d="M1143.400 460.200v7.600l7.400-3.800z" stroke="#d0d2d6" stroke-width=".8"/></g>
<path d="M1179.900 456h11.100v11.200l-5.600 4.500-5.500-4.500z" stroke="#a9adb3" stroke-width="1.500" stroke-linejoin="miter"/>
</svg>
<!--TB-END-->
</div>

<!-- ================= TIMELINE ================= -->
<div id="tl">
  <!--TL-START-->
<div class="row rl" style="top:22px;height:85px"></div>
<div class="row rd" style="top:107px;height:55px"></div>
<div class="row rl" style="top:162px;height:85px"></div>
<div class="row rd" style="top:247px;height:86px"></div>
<div class="row rl" style="top:333px;height:55px"></div>
<div class="row rd" style="top:388px;height:55px"></div>
<div class="abs" style="left:153px;top:40.5px;width:1047px;height:400px;background:rgba(0,0,0,.045)"></div>
<div class="abs" style="left:247px;top:85px;width:318.500px;height:309px;background:rgba(255,255,255,.095);border:1px solid rgba(255,255,255,.3)"></div>
<svg style="left:0;top:0" width="1200" height="436" viewBox="0 487 1200 436">
<defs>
<linearGradient id="gb" x1="0" x2="1" y1="0" y2="0"><stop offset="0" stop-color="#4c65c4"/><stop offset=".45" stop-color="#5872d8"/></linearGradient>
<linearGradient id="gp" x1="0" x2="1" y1="0" y2="0"><stop offset="0" stop-color="#6a58b8"/><stop offset=".14" stop-color="#7663c8"/></linearGradient>
<linearGradient id="sky" x1="0" x2="0" y1="0" y2="1"><stop offset="0" stop-color="#5a3832"/><stop offset=".3" stop-color="#8c4f40"/><stop offset=".7" stop-color="#99574a"/><stop offset="1" stop-color="#7c4a3a"/></linearGradient>
<linearGradient id="pit" x1="0" x2="1" y1="0" y2="1"><stop offset="0" stop-color="#65502a"/><stop offset="1" stop-color="#7a6232"/></linearGradient>
<filter id="nz" x="0" y="0" width="1" height="1"><feTurbulence type="fractalNoise" baseFrequency=".3 .7" numOctaves="2" seed="4" result="t"/><feColorMatrix in="t" values="0 0 0 0 .15  0 0 0 0 .08  0 0 0 0 .08  1.5 0 0 0 -.55" result="a"/><feComposite in="a" in2="SourceGraphic" operator="in"/></filter>
<filter id="nz2" x="0" y="0" width="1" height="1"><feTurbulence type="fractalNoise" baseFrequency=".35 .8" numOctaves="2" seed="9" result="t"/><feColorMatrix in="t" values="0 0 0 0 .8  0 0 0 0 .48  0 0 0 0 .4  0 1.4 0 0 -.62" result="a"/><feComposite in="a" in2="SourceGraphic" operator="in"/></filter>
<pattern id="stad" x="247.5" y="736.7" width="42" height="49" patternUnits="userSpaceOnUse">
  <rect width="42" height="49" fill="url(#sky)"/>
  <path d="M0 7.500C12 5 26 4.500 42 6M0 12.500C12 9.500 26 8.500 42 10M0 18C12 14.500 26 13 42 14" stroke="#3c2422" stroke-width="1.600" opacity=".6" fill="none"/>
  <path d="M0 10C12 7.300 26 6.500 42 8M0 15.300C12 12 26 10.800 42 12M0 21C12 17.500 26 16 42 17" stroke="#b87562" stroke-width="1.100" opacity=".5" fill="none"/>
  <rect width="42" height="49" filter="url(#nz)"/>
  <rect width="42" height="49" filter="url(#nz2)"/>
  <path d="M4 33.500C14 30.500 26 25 42 19V49H3z" fill="url(#pit)"/>
  <path d="M4 34C14 31 26 25.500 42 19.500" stroke="#7a4436" stroke-width="2.200" opacity=".7" fill="none"/>
  <path d="M8 41L42 27v7L10 46z" fill="#97803f" opacity=".28"/>
  <path d="M17 42.500l6-2.500 2.500 2.500-6 2.500z" fill="none" stroke="#c2b07c" stroke-width=".7" opacity=".7"/>
  <path d="M34.500 30.500v1.300M34.500 33v1.300M23.500 29.500v1" stroke="#e0643c" stroke-width="1" opacity=".8"/>
</pattern>
<clipPath id="cpA"><rect x="154.2" y="736.7" width="24" height="80.100" rx="8"/></clipPath>
<clipPath id="cpB"><rect x="179.3" y="736.7" width="37.900" height="80.100" rx="8"/></clipPath>
<clipPath id="cpC"><rect x="218.3" y="736.7" width="21.400" height="80.100" rx="8"/></clipPath>
</defs>
<path d="M154.2 527.5H175V580.9A10.400000000000006 10.400000000000006 0 0 1 154.2 580.9z" fill="url(#gb)"/>
<path d="M164.7 527.5H175V539H167.7a3 3 0 0 1-3-3z" fill="#fcfcfe"/>
<path d="M171.8 527.5H175V535.2H173.4a1.600 1.600 0 0 1-1.600-1.600z" fill="#5872d8"/>
<path d="M180 527.5H200.8V580.9A10.400000000000006 10.400000000000006 0 0 1 180 580.9z" fill="url(#gb)"/>
<path d="M190.5 527.5H200.8V539H193.5a3 3 0 0 1-3-3z" fill="#fcfcfe"/>
<path d="M197.6 527.5H200.8V535.2H199.2a1.600 1.600 0 0 1-1.600-1.600z" fill="#5872d8"/>
<path d="M206.9 527.5H227.8V580.8499999999999A10.450000000000003 10.450000000000003 0 0 1 206.9 580.8499999999999z" fill="url(#gb)"/>
<path d="M217.5 527.5H227.8V539H220.5a3 3 0 0 1-3-3z" fill="#fcfcfe"/>
<path d="M224.6 527.5H227.8V535.2H226.2a1.600 1.600 0 0 1-1.600-1.600z" fill="#5872d8"/>
<rect x="154.2" y="596.3" width="86" height="49.900" rx="8.500" fill="url(#gp)"/>
<rect x="164.7" y="612.5" width="17.900" height="17.500" rx="3.200" fill="#fbfaff"/>
<circle cx="170" cy="617.6" r="1.700" fill="#7663c8"/>
<path d="M166.800 627.300l4-5.200 2.600 3 2.300-2.300 4.600 4.500z" fill="#7663c8"/>
<path d="M251.50 597.80C256.00 600.42 256.00 603.05 256.00 605.30V637.20C256.00 639.45 256.00 642.08 251.50 644.70C247.00 642.08 247.00 639.45 247.00 637.20V605.30C247.00 603.05 247.00 600.42 251.50 597.80z" fill="#f4f7fe"/>
<path d="M251.50 602.50C253.70 604.60 253.70 606.70 253.70 608.50V634.00C253.70 635.80 253.70 637.90 251.50 640.00C249.30 637.90 249.30 635.80 249.30 634.00V608.50C249.30 606.70 249.30 604.60 251.50 602.50z" fill="#5872d8"/>
<path d="M267.50 597.80C272.00 600.42 272.00 603.05 272.00 605.30V637.20C272.00 639.45 272.00 642.08 267.50 644.70C263.00 642.08 263.00 639.45 263.00 637.20V605.30C263.00 603.05 263.00 600.42 267.50 597.80z" fill="#f4f7fe"/>
<path d="M267.50 602.50C269.70 604.60 269.70 606.70 269.70 608.50V634.00C269.70 635.80 269.70 637.90 267.50 640.00C265.30 637.90 265.30 635.80 265.30 634.00V608.50C265.30 606.70 265.30 604.60 267.50 602.50z" fill="#5872d8"/>
<path d="M286.50 597.80C290.30 600.42 290.30 603.05 290.30 605.30V637.20C290.30 639.45 290.30 642.08 286.50 644.70C282.70 642.08 282.70 639.45 282.70 637.20V605.30C282.70 603.05 282.70 600.42 286.50 597.80z" fill="#f4f7fe"/>
<path d="M286.50 602.50C288.00 604.60 288.00 606.70 288.00 608.50V634.00C288.00 635.80 288.00 637.90 286.50 640.00C285.00 637.90 285.00 635.80 285.00 634.00V608.50C285.00 606.70 285.00 604.60 286.50 602.50z" fill="#5872d8"/>
<path d="M302.40 597.80C306.20 600.42 306.20 603.05 306.20 605.30V637.20C306.20 639.45 306.20 642.08 302.40 644.70C298.60 642.08 298.60 639.45 298.60 637.20V605.30C298.60 603.05 298.60 600.42 302.40 597.80z" fill="#f4f7fe"/>
<path d="M302.40 602.50C303.90 604.60 303.90 606.70 303.90 608.50V634.00C303.90 635.80 303.90 637.90 302.40 640.00C300.90 637.90 300.90 635.80 300.90 634.00V608.50C300.90 606.70 300.90 604.60 302.40 602.50z" fill="#5872d8"/>
<path d="M326.50 597.80C331.10 600.42 331.10 603.05 331.10 605.30V637.20C331.10 639.45 331.10 642.08 326.50 644.70C321.90 642.08 321.90 639.45 321.90 637.20V605.30C321.90 603.05 321.90 600.42 326.50 597.80z" fill="#f4f7fe"/>
<path d="M326.50 602.50C328.80 604.60 328.80 606.70 328.80 608.50V634.00C328.80 635.80 328.80 637.90 326.50 640.00C324.20 637.90 324.20 635.80 324.20 634.00V608.50C324.20 606.70 324.20 604.60 326.50 602.50z" fill="#5872d8"/>
<path d="M345.25 597.80C349.00 600.42 349.00 603.05 349.00 605.30V637.20C349.00 639.45 349.00 642.08 345.25 644.70C341.50 642.08 341.50 639.45 341.50 637.20V605.30C341.50 603.05 341.50 600.42 345.25 597.80z" fill="#f4f7fe"/>
<path d="M345.25 602.50C346.70 604.60 346.70 606.70 346.70 608.50V634.00C346.70 635.80 346.70 637.90 345.25 640.00C343.80 637.90 343.80 635.80 343.80 634.00V608.50C343.80 606.70 343.80 604.60 345.25 602.50z" fill="#5872d8"/>
<path d="M364.45 597.80C369.00 600.42 369.00 603.05 369.00 605.30V637.20C369.00 639.45 369.00 642.08 364.45 644.70C359.90 642.08 359.90 639.45 359.90 637.20V605.30C359.90 603.05 359.90 600.42 364.45 597.80z" fill="#f4f7fe"/>
<path d="M364.45 602.50C366.70 604.60 366.70 606.70 366.70 608.50V634.00C366.70 635.80 366.70 637.90 364.45 640.00C362.20 637.90 362.20 635.80 362.20 634.00V608.50C362.20 606.70 362.20 604.60 364.45 602.50z" fill="#5872d8"/>
<path d="M388.15 597.80C392.00 600.42 392.00 603.05 392.00 605.30V637.20C392.00 639.45 392.00 642.08 388.15 644.70C384.30 642.08 384.30 639.45 384.30 637.20V605.30C384.30 603.05 384.30 600.42 388.15 597.80z" fill="#f4f7fe"/>
<path d="M388.15 602.50C389.70 604.60 389.70 606.70 389.70 608.50V634.00C389.70 635.80 389.70 637.90 388.15 640.00C386.60 637.90 386.60 635.80 386.60 634.00V608.50C386.60 606.70 386.60 604.60 388.15 602.50z" fill="#5872d8"/>
<path d="M420.55 597.80C425.10 600.42 425.10 603.05 425.10 605.30V637.20C425.10 639.45 425.10 642.08 420.55 644.70C416.00 642.08 416.00 639.45 416.00 637.20V605.30C416.00 603.05 416.00 600.42 420.55 597.80z" fill="#f4f7fe"/>
<path d="M420.55 602.50C422.80 604.60 422.80 606.70 422.80 608.50V634.00C422.80 635.80 422.80 637.90 420.55 640.00C418.30 637.90 418.30 635.80 418.30 634.00V608.50C418.30 606.70 418.30 604.60 420.55 602.50z" fill="#5872d8"/>
<path d="M446.85 597.80C450.80 600.42 450.80 603.05 450.80 605.30V637.20C450.80 639.45 450.80 642.08 446.85 644.70C442.90 642.08 442.90 639.45 442.90 637.20V605.30C442.90 603.05 442.90 600.42 446.85 597.80z" fill="#f4f7fe"/>
<path d="M446.85 602.50C448.50 604.60 448.50 606.70 448.50 608.50V634.00C448.50 635.80 448.50 637.90 446.85 640.00C445.20 637.90 445.20 635.80 445.20 634.00V608.50C445.20 606.70 445.20 604.60 446.85 602.50z" fill="#5872d8"/>
<path d="M465.20 597.80C469.10 600.42 469.10 603.05 469.10 605.30V637.20C469.10 639.45 469.10 642.08 465.20 644.70C461.30 642.08 461.30 639.45 461.30 637.20V605.30C461.30 603.05 461.30 600.42 465.20 597.80z" fill="#f4f7fe"/>
<path d="M465.20 602.50C466.80 604.60 466.80 606.70 466.80 608.50V634.00C466.80 635.80 466.80 637.90 465.20 640.00C463.60 637.90 463.60 635.80 463.60 634.00V608.50C463.60 606.70 463.60 604.60 465.20 602.50z" fill="#5872d8"/>
<path d="M480.90 597.80C484.60 600.42 484.60 603.05 484.60 605.30V637.20C484.60 639.45 484.60 642.08 480.90 644.70C477.20 642.08 477.20 639.45 477.20 637.20V605.30C477.20 603.05 477.20 600.42 480.90 597.80z" fill="#f4f7fe"/>
<path d="M480.90 602.50C482.30 604.60 482.30 606.70 482.30 608.50V634.00C482.30 635.80 482.30 637.90 480.90 640.00C479.50 637.90 479.50 635.80 479.50 634.00V608.50C479.50 606.70 479.50 604.60 480.90 602.50z" fill="#5872d8"/>
<path d="M489.15 597.80C493.30 600.42 493.30 603.05 493.30 605.30V637.20C493.30 639.45 493.30 642.08 489.15 644.70C485.00 642.08 485.00 639.45 485.00 637.20V605.30C485.00 603.05 485.00 600.42 489.15 597.80z" fill="#f4f7fe"/>
<path d="M489.15 602.50C491.00 604.60 491.00 606.70 491.00 608.50V634.00C491.00 635.80 491.00 637.90 489.15 640.00C487.30 637.90 487.30 635.80 487.30 634.00V608.50C487.30 606.70 487.30 604.60 489.15 602.50z" fill="#5872d8"/>
<path d="M497.10 597.80C500.90 600.42 500.90 603.05 500.90 605.30V637.20C500.90 639.45 500.90 642.08 497.10 644.70C493.30 642.08 493.30 639.45 493.30 637.20V605.30C493.30 603.05 493.30 600.42 497.10 597.80z" fill="#f4f7fe"/>
<path d="M497.10 602.50C498.60 604.60 498.60 606.70 498.60 608.50V634.00C498.60 635.80 498.60 637.90 497.10 640.00C495.60 637.90 495.60 635.80 495.60 634.00V608.50C495.60 606.70 495.60 604.60 497.10 602.50z" fill="#5872d8"/>
<path d="M505.10 597.80C509.50 600.42 509.50 603.05 509.50 605.30V637.20C509.50 639.45 509.50 642.08 505.10 644.70C500.70 642.08 500.70 639.45 500.70 637.20V605.30C500.70 603.05 500.70 600.42 505.10 597.80z" fill="#f4f7fe"/>
<path d="M505.10 602.50C507.20 604.60 507.20 606.70 507.20 608.50V634.00C507.20 635.80 507.20 637.90 505.10 640.00C503.00 637.90 503.00 635.80 503.00 634.00V608.50C503.00 606.70 503.00 604.60 505.10 602.50z" fill="#5872d8"/>
<path d="M243.30 654.00C247.00 656.62 247.00 659.25 247.00 661.50V722.00C247.00 724.25 247.00 726.88 243.30 729.50C239.60 726.88 239.60 724.25 239.60 722.00V661.50C239.60 659.25 239.60 656.62 243.30 654.00z" fill="#eef6f4"/>
<path d="M243.30 659.00C245.10 661.10 245.10 663.20 245.10 665.00V718.50C245.10 720.30 245.10 722.40 243.30 724.50C241.50 722.40 241.50 720.30 241.50 718.50V665.00C241.50 663.20 241.50 661.10 243.30 659.00z" fill="#4f9b85"/>
<g clip-path="url(#cpA)"><g transform="translate(-93.3 0)"><rect x="247.5" y="736.7" width="24.0" height="48.300" fill="url(#stad)"/></g>
<rect x="154.2" y="785" width="24.0" height="32" fill="#1a332c"/>
<rect x="154.2" y="792.6" width="24.0" height="1.800" fill="#79cdae"/>
<rect x="165.0" y="747.8" width="17.400" height="17.400" rx="3.500" fill="#fdfdfd"/>
<path d="M170.8 751.7v9.600l7.600-4.800z" fill="#5c3a30"/>
<rect x="154.2" y="736.7" width="24.0" height="80.100" fill="#000" opacity="0"/></g>
<rect x="154.7" y="737.2" width="23.0" height="79.100" rx="7.500" fill="none" stroke="#3b6b5b" stroke-width="1"/>
<g clip-path="url(#cpB)"><g transform="translate(-68.2 0)"><rect x="247.5" y="736.7" width="37.89999999999998" height="48.300" fill="url(#stad)"/></g>
<rect x="179.3" y="785" width="37.89999999999998" height="32" fill="#1a332c"/>
<rect x="179.3" y="792.6" width="37.89999999999998" height="1.800" fill="#79cdae"/>
<rect x="190.1" y="747.8" width="17.400" height="17.400" rx="3.500" fill="#fdfdfd"/>
<path d="M195.9 751.7v9.600l7.600-4.800z" fill="#5c3a30"/>
<rect x="179.3" y="736.7" width="37.89999999999998" height="80.100" fill="#000" opacity="0"/></g>
<rect x="179.8" y="737.2" width="36.89999999999998" height="79.100" rx="7.500" fill="none" stroke="#3b6b5b" stroke-width="1"/>
<g clip-path="url(#cpC)"><g transform="translate(-29.2 0)"><rect x="247.5" y="736.7" width="21.399999999999977" height="48.300" fill="url(#stad)"/></g>
<rect x="218.3" y="785" width="21.399999999999977" height="32" fill="#1a332c"/>
<rect x="218.3" y="792.6" width="21.399999999999977" height="1.800" fill="#79cdae"/>
<rect x="229.1" y="747.8" width="17.400" height="17.400" rx="3.500" fill="#fdfdfd"/>
<path d="M234.9 751.7v9.600l7.600-4.800z" fill="#5c3a30"/>
<rect x="218.3" y="736.7" width="21.399999999999977" height="80.100" fill="#000" opacity="0"/></g>
<rect x="218.8" y="737.2" width="20.399999999999977" height="79.100" rx="7.500" fill="none" stroke="#3b6b5b" stroke-width="1"/>
<clipPath id="cs0"><rect x="248.5" y="737.7" width="36.69999999999999" height="78.100" rx="7.500"/></clipPath>
<g clip-path="url(#cs0)"><g transform="translate(0.0 0)"><rect x="247.5" y="736.7" width="38.69999999999999" height="48.300" fill="url(#stad)"/></g>
<rect x="247.5" y="785" width="38.69999999999999" height="32" fill="#1a332c"/>
<rect x="247.5" y="792.6" width="38.69999999999999" height="1.800" fill="#86dcbc"/>
<rect x="258.3" y="747.8" width="17.400" height="17.400" rx="3.500" fill="#ffffff"/>
<path d="M264.1 751.7v9.600l7.600-4.800z" fill="#5c3a30"/></g>
<rect x="248.5" y="737.7" width="36.69999999999999" height="78.100" rx="7.500" fill="none" stroke="#eef4fa" stroke-width="2.300"/>
<clipPath id="cs1"><rect x="288.3" y="737.7" width="35.5" height="78.100" rx="7.500"/></clipPath>
<g clip-path="url(#cs1)"><g transform="translate(39.8 0)"><rect x="247.5" y="736.7" width="37.5" height="48.300" fill="url(#stad)"/></g>
<rect x="287.3" y="785" width="37.5" height="32" fill="#1a332c"/>
<rect x="287.3" y="792.6" width="37.5" height="1.800" fill="#86dcbc"/>
<rect x="298.1" y="747.8" width="17.400" height="17.400" rx="3.500" fill="#ffffff"/>
<path d="M303.9 751.7v9.600l7.600-4.800z" fill="#5c3a30"/></g>
<rect x="288.3" y="737.7" width="35.5" height="78.100" rx="7.500" fill="none" stroke="#eef4fa" stroke-width="2.300"/>
<clipPath id="cs2"><rect x="327" y="737.7" width="36.19999999999999" height="78.100" rx="7.500"/></clipPath>
<g clip-path="url(#cs2)"><g transform="translate(78.5 0)"><rect x="247.5" y="736.7" width="38.19999999999999" height="48.300" fill="url(#stad)"/></g>
<rect x="326" y="785" width="38.19999999999999" height="32" fill="#1a332c"/>
<rect x="326" y="792.6" width="38.19999999999999" height="1.800" fill="#86dcbc"/>
<rect x="336.8" y="747.8" width="17.400" height="17.400" rx="3.500" fill="#ffffff"/>
<path d="M342.6 751.7v9.600l7.600-4.800z" fill="#5c3a30"/></g>
<rect x="327" y="737.7" width="36.19999999999999" height="78.100" rx="7.500" fill="none" stroke="#eef4fa" stroke-width="2.300"/>
<clipPath id="cs3"><rect x="366.7" y="737.7" width="36.69999999999999" height="78.100" rx="7.500"/></clipPath>
<g clip-path="url(#cs3)"><g transform="translate(118.2 0)"><rect x="247.5" y="736.7" width="38.69999999999999" height="48.300" fill="url(#stad)"/></g>
<rect x="365.7" y="785" width="38.69999999999999" height="32" fill="#1a332c"/>
<rect x="365.7" y="792.6" width="38.69999999999999" height="1.800" fill="#86dcbc"/>
<rect x="376.5" y="747.8" width="17.400" height="17.400" rx="3.500" fill="#ffffff"/>
<path d="M382.3 751.7v9.600l7.600-4.800z" fill="#5c3a30"/></g>
<rect x="366.7" y="737.7" width="36.69999999999999" height="78.100" rx="7.500" fill="none" stroke="#eef4fa" stroke-width="2.300"/>
<clipPath id="cs4"><rect x="406.8" y="737.7" width="36.39999999999998" height="78.100" rx="7.500"/></clipPath>
<g clip-path="url(#cs4)"><g transform="translate(158.3 0)"><rect x="247.5" y="736.7" width="38.39999999999998" height="48.300" fill="url(#stad)"/></g>
<rect x="405.8" y="785" width="38.39999999999998" height="32" fill="#1a332c"/>
<rect x="405.8" y="792.6" width="38.39999999999998" height="1.800" fill="#86dcbc"/>
<rect x="416.6" y="747.8" width="17.400" height="17.400" rx="3.500" fill="#ffffff"/>
<path d="M422.4 751.7v9.600l7.600-4.800z" fill="#5c3a30"/></g>
<rect x="406.8" y="737.7" width="36.39999999999998" height="78.100" rx="7.500" fill="none" stroke="#eef4fa" stroke-width="2.300"/>
<clipPath id="cs5"><rect x="446.5" y="737.7" width="21.0" height="78.100" rx="7.500"/></clipPath>
<g clip-path="url(#cs5)"><g transform="translate(198.0 0)"><rect x="247.5" y="736.7" width="23.0" height="48.300" fill="url(#stad)"/></g>
<rect x="445.5" y="785" width="23.0" height="32" fill="#1a332c"/>
<rect x="445.5" y="792.6" width="23.0" height="1.800" fill="#86dcbc"/>
<rect x="456.3" y="747.8" width="17.400" height="17.400" rx="3.500" fill="#ffffff"/>
<path d="M462.1 751.7v9.600l7.600-4.800z" fill="#5c3a30"/></g>
<rect x="446.5" y="737.7" width="21.0" height="78.100" rx="7.500" fill="none" stroke="#eef4fa" stroke-width="2.300"/>
<path d="M243.75 736.70C247.50 739.33 247.50 741.95 247.50 744.20V809.30C247.50 811.55 247.50 814.17 243.75 816.80C240.00 814.17 240.00 811.55 240.00 809.30V744.20C240.00 741.95 240.00 739.33 243.75 736.70z" fill="#f2f7fc"/>
<path d="M243.75 741.50C245.40 743.25 245.40 745.00 245.40 746.50V780.00C245.40 781.50 245.40 783.25 243.75 785.00C242.10 783.25 242.10 781.50 242.10 780.00V746.50C242.10 745.00 242.10 743.25 243.75 741.50z" fill="#6fb0ea"/>
<path d="M243.75 783.00C245.40 784.75 245.40 786.50 245.40 788.00V807.00C245.40 808.50 245.40 810.25 243.75 812.00C242.10 810.25 242.10 808.50 242.10 807.00V788.00C242.10 786.50 242.10 784.75 243.75 783.00z" fill="#5fa58c"/>
<rect x="242.1" y="780" width="3.300" height="8" fill="#6fb0ea"/><rect x="242.1" y="785" width="3.300" height="6" fill="#5fa58c"/>
<path d="M155.65 828.00C156.90 829.75 156.90 831.50 156.90 833.00V862.00C156.90 863.50 156.90 865.25 155.65 867.00C154.40 865.25 154.40 863.50 154.40 862.00V833.00C154.40 831.50 154.40 829.75 155.65 828.00z" fill="#4f9b85"/>
<path d="M243.80 827.40C245.30 829.15 245.30 830.90 245.30 832.40V863.50C245.30 865.00 245.30 866.75 243.80 868.50C242.30 866.75 242.30 865.00 242.30 863.50V832.40C242.30 830.90 242.30 829.15 243.80 827.40z" fill="#f4f8fc"/>
<path d="M265.40 827.40C266.90 829.15 266.90 830.90 266.90 832.40V863.50C266.90 865.00 266.90 866.75 265.40 868.50C263.90 866.75 263.90 865.00 263.90 863.50V832.40C263.90 830.90 263.90 829.15 265.40 827.40z" fill="#f4f8fc"/>
<path d="M277.80 827.40C279.15 829.15 279.15 830.90 279.15 832.40V863.50C279.15 865.00 279.15 866.75 277.80 868.50C276.45 866.75 276.45 865.00 276.45 863.50V832.40C276.45 830.90 276.45 829.15 277.80 827.40z" fill="#f4f8fc"/>
<path d="M291.30 827.40C292.65 829.15 292.65 830.90 292.65 832.40V863.50C292.65 865.00 292.65 866.75 291.30 868.50C289.95 866.75 289.95 865.00 289.95 863.50V832.40C289.95 830.90 289.95 829.15 291.30 827.40z" fill="#f4f8fc"/>
<path d="M302.60 827.40C303.95 829.15 303.95 830.90 303.95 832.40V863.50C303.95 865.00 303.95 866.75 302.60 868.50C301.25 866.75 301.25 865.00 301.25 863.50V832.40C301.25 830.90 301.25 829.15 302.60 827.40z" fill="#f4f8fc"/>
<path d="M313.80 827.40C315.60 829.15 315.60 830.90 315.60 832.40V863.50C315.60 865.00 315.60 866.75 313.80 868.50C312.00 866.75 312.00 865.00 312.00 863.50V832.40C312.00 830.90 312.00 829.15 313.80 827.40z" fill="#f4f8fc"/>
<path d="M327.80 827.40C329.60 829.15 329.60 830.90 329.60 832.40V863.50C329.60 865.00 329.60 866.75 327.80 868.50C326.00 866.75 326.00 865.00 326.00 863.50V832.40C326.00 830.90 326.00 829.15 327.80 827.40z" fill="#f4f8fc"/>
<path d="M333.80 827.40C335.60 829.15 335.60 830.90 335.60 832.40V863.50C335.60 865.00 335.60 866.75 333.80 868.50C332.00 866.75 332.00 865.00 332.00 863.50V832.40C332.00 830.90 332.00 829.15 333.80 827.40z" fill="#f4f8fc"/>
<path d="M343.00 827.40C344.80 829.15 344.80 830.90 344.80 832.40V863.50C344.80 865.00 344.80 866.75 343.00 868.50C341.20 866.75 341.20 865.00 341.20 863.50V832.40C341.20 830.90 341.20 829.15 343.00 827.40z" fill="#f4f8fc"/>
<path d="M350.70 827.40C352.50 829.15 352.50 830.90 352.50 832.40V863.50C352.50 865.00 352.50 866.75 350.70 868.50C348.90 866.75 348.90 865.00 348.90 863.50V832.40C348.90 830.90 348.90 829.15 350.70 827.40z" fill="#f4f8fc"/>
<path d="M364.20 827.40C366.00 829.15 366.00 830.90 366.00 832.40V863.50C366.00 865.00 366.00 866.75 364.20 868.50C362.40 866.75 362.40 865.00 362.40 863.50V832.40C362.40 830.90 362.40 829.15 364.20 827.40z" fill="#f4f8fc"/>
<path d="M382.20 827.40C383.55 829.15 383.55 830.90 383.55 832.40V863.50C383.55 865.00 383.55 866.75 382.20 868.50C380.85 866.75 380.85 865.00 380.85 863.50V832.40C380.85 830.90 380.85 829.15 382.20 827.40z" fill="#f4f8fc"/>
<path d="M390.30 827.40C391.65 829.15 391.65 830.90 391.65 832.40V863.50C391.65 865.00 391.65 866.75 390.30 868.50C388.95 866.75 388.95 865.00 388.95 863.50V832.40C388.95 830.90 388.95 829.15 390.30 827.40z" fill="#f4f8fc"/>
<path d="M400.20 827.40C401.45 829.15 401.45 830.90 401.45 832.40V863.50C401.45 865.00 401.45 866.75 400.20 868.50C398.95 866.75 398.95 865.00 398.95 863.50V832.40C398.95 830.90 398.95 829.15 400.20 827.40z" fill="#f4f8fc"/>
<path d="M405.80 827.40C407.60 829.15 407.60 830.90 407.60 832.40V863.50C407.60 865.00 407.60 866.75 405.80 868.50C404.00 866.75 404.00 865.00 404.00 863.50V832.40C404.00 830.90 404.00 829.15 405.80 827.40z" fill="#f4f8fc"/>
</svg>
<div class="abs" style="left:154.2px;top:109.3px;width:86px;height:49.900px;overflow:hidden;border-radius:8.500px"><div class="abs" style="left:36.400px;top:13.300px;font-size:14.300px;line-height:24px;color:#fff;white-space:nowrap;text-shadow:0 1px 1.500px rgba(40,20,90,.45)">サンプル</div></div>
<div class="abs" style="left:0;top:0;width:1200px;height:39px;background:#23272b"></div>
<svg style="left:0;top:0" width="1200" height="42" viewBox="0 487 1200 42">
<path d="M170.0 520.9V527M185.4 520.9V527M200.8 520.9V527M216.2 520.9V527M231.6 520.9V527M247.0 520.9V527M262.4 520.9V527M277.8 520.9V527M293.2 520.9V527M308.6 520.9V527M324.0 520.9V527M354.8 520.9V527M370.2 520.9V527M385.6 520.9V527M401.1 520.9V527M416.5 520.9V527M431.9 520.9V527M447.3 520.9V527M462.7 520.9V527M478.1 520.9V527M493.5 520.9V527M508.9 520.9V527M539.7 520.9V527M555.1 520.9V527M570.5 520.9V527M585.9 520.9V527M601.3 520.9V527M616.7 520.9V527M632.1 520.9V527M647.5 520.9V527M662.9 520.9V527M678.3 520.9V527M693.7 520.9V527M724.5 520.9V527M739.9 520.9V527M755.3 520.9V527M770.7 520.9V527M786.1 520.9V527M801.5 520.9V527M816.9 520.9V527M832.3 520.9V527M847.7 520.9V527M863.2 520.9V527M878.6 520.9V527M909.4 520.9V527M924.8 520.9V527M940.2 520.9V527M955.6 520.9V527M971.0 520.9V527M986.4 520.9V527M1001.8 520.9V527M1017.2 520.9V527M1032.6 520.9V527M1048.0 520.9V527M1063.4 520.9V527M1094.2 520.9V527M1109.6 520.9V527M1125.0 520.9V527M1140.4 520.9V527M1155.8 520.9V527M1171.2 520.9V527M1186.6 520.9V527M1202.0 520.9V527" stroke="#a9adb3" stroke-width="1.500"/>
<path d="M339.4 515.2V527.5M524.3 515.2V527.5M709.1 515.2V527.5M894.0 515.2V527.5M1078.8 515.2V527.5" stroke="#c3c6ca" stroke-width="1.500"/>
<path d="M153.500 526.900H255.800" stroke="#d43a2c" stroke-width="1.600"/>
<path d="M263 526.900H272M283 526.900H290.3M298.6 526.900H306.2M321.9 526.900H331.1M341.5 526.900H349M359.9 526.900H369M384.3 526.900H392M416 526.900H425.1M442.9 526.900H450.8M461.3 526.900H469.1M477.2 526.900H509.5" stroke="#d43a2c" stroke-width="1.600"/>
</svg>
<div class="rul" style="left:154.2px">00:00:00:00</div>
<div class="rul" style="left:339.0px">00:01:00:00</div>
<div class="rul" style="left:523.9px">00:02:00:00</div>
<div class="rul" style="left:708.7px">00:03:00:00</div>
<div class="rul" style="left:893.6px">00:04:00:00</div>
<div class="rul" style="left:1078.4px">00:05:00:00</div>
<div class="abs" style="left:0;top:0;width:153.500px;height:40.5px;background:#23272b"></div>
<div class="abs" style="left:153px;top:40.5px;width:1px;height:400px;background:rgba(0,0,0,.18)"></div>
<div class="abs" style="left:0;top:0;width:1200px;height:1px;background:#1c2024"></div>
<svg style="left:0;top:0" width="1200" height="436" viewBox="0 487 1200 436">
<rect x="639.800" y="496" width="2.400" height="430" fill="#d2625e"/>
<path d="M635.400 488.400h11.400a2 2 0 0 1 2 2v6.400L641.100 503.600 633.400 496.900V490.400a2 2 0 0 1 2-2z" fill="#f06c68"/>
<rect x="627.500" y="652.100" width="27" height="42.100" rx="13.500" fill="#ee6b66"/>
<g fill="none" stroke="#fff" stroke-width="1.150" stroke-linecap="round"><path d="M635.900 664.600L644.400 680.200a3.100 3.100 0 1 0 2.500-5.800c-2.400-.5-4.400-.6-5.900-.5"/><path d="M646.100 664.600L637.600 680.200a3.100 3.100 0 1 1-2.500-5.800c2.400-.5 4.400-.6 5.900-.5"/></g>
</svg>
<div class="abs" style="left:608.500px;top:221px;font-size:50.400px;line-height:74px;font-weight:bold;color:#e8432b;white-space:nowrap;letter-spacing:-.1px">クリックしながら囲う</div>
<!--TL-END-->
  <!--HD-START-->
<svg style="left:0;top:0" width="154" height="436" viewBox="0 487 154 436">
<g fill="none" stroke="#b9bcc0" stroke-width="1.300" stroke-linejoin="round"><path d="M18.300 512.600H14.400a.8.800 0 0 1-.8-.8V500.100a.8.800 0 0 1 .8-.8H26.300a.8.800 0 0 1 .8.800V503.300"/><rect x="18.300" y="503.300" width="13.600" height="13.400" rx=".8"/><path d="M25.100 506.800v6.400M21.900 510h6.400" stroke-width="1.500"/></g>
<g fill="none" stroke="#b9bcc0" stroke-width="1.300" stroke-linecap="round"><g transform="rotate(-43 60.600 506.900)"><path d="M59 502.900H55.100a4 4 0 0 0 0 8H58.400"/><path d="M62.800 502.900H66.100a4 4 0 0 1 0 8H62.200"/></g><path d="M55.600 499L65.900 516.400"/></g>
<rect x="12" y="545.9" width="12.500" height="10.200" rx="1" fill="#dcdde0"/><path d="M16.300 548.1v5.800l4.700-2.900z" fill="#23272b"/>
<rect x="60.400" y="548.9" width="11.200" height="8" rx="1" fill="none" stroke="#dcdde0" stroke-width="1.400"/><path d="M62.300 548.9v-2.200a3.700 3.700 0 0 1 7.200-1.300" fill="none" stroke="#dcdde0" stroke-width="1.400" stroke-linecap="round"/><circle cx="66" cy="552.8" r="1.100" fill="#dcdde0"/>
<path d="M93.700 548.6h2.800l4.300-3.800v12.400l-4.300-3.800h-2.800z" fill="none" stroke="#dcdde0" stroke-width="1.300" stroke-linejoin="round"/><path d="M103.100 548.4a3.600 3.600 0 0 1 0 5.200M105.300 546.6a6.400 6.400 0 0 1 0 8.800" fill="none" stroke="#dcdde0" stroke-width="1.200" stroke-linecap="round"/>
<path d="M127.700 551.0c2-3.300 4.400-4.900 7-4.900s5 1.600 7 4.900c-2 3.300-4.400 4.900-7 4.900s-5-1.600-7-4.900z" fill="none" stroke="#dcdde0" stroke-width="1.400" stroke-linejoin="round"/><circle cx="134.700" cy="551.0" r="2.700" fill="#dcdde0"/>
<rect x="12" y="615.9" width="12.500" height="10.200" rx="1" fill="#dcdde0"/><path d="M16.300 618.1v5.800l4.700-2.900z" fill="#23272b"/>
<rect x="60.400" y="618.9" width="11.200" height="8" rx="1" fill="none" stroke="#dcdde0" stroke-width="1.400"/><path d="M62.300 618.9v-2.200a3.700 3.700 0 0 1 7.200-1.300" fill="none" stroke="#dcdde0" stroke-width="1.400" stroke-linecap="round"/><circle cx="66" cy="622.8" r="1.100" fill="#dcdde0"/>
<path d="M93.700 618.6h2.800l4.300-3.800v12.400l-4.300-3.800h-2.800z" fill="none" stroke="#dcdde0" stroke-width="1.300" stroke-linejoin="round"/><path d="M103.100 618.4a3.600 3.600 0 0 1 0 5.200M105.300 616.6a6.400 6.400 0 0 1 0 8.800" fill="none" stroke="#dcdde0" stroke-width="1.200" stroke-linecap="round"/>
<path d="M127.700 621.0c2-3.300 4.400-4.900 7-4.900s5 1.600 7 4.900c-2 3.300-4.400 4.900-7 4.900s-5-1.600-7-4.900z" fill="none" stroke="#dcdde0" stroke-width="1.400" stroke-linejoin="round"/><circle cx="134.700" cy="621.0" r="2.700" fill="#dcdde0"/>
<rect x="12" y="686.4" width="12.500" height="10.200" rx="1" fill="#dcdde0"/><path d="M16.300 688.6v5.800l4.700-2.900z" fill="#23272b"/>
<rect x="60.400" y="689.4" width="11.200" height="8" rx="1" fill="none" stroke="#dcdde0" stroke-width="1.400"/><path d="M62.300 689.4v-2.200a3.700 3.700 0 0 1 7.200-1.300" fill="none" stroke="#dcdde0" stroke-width="1.400" stroke-linecap="round"/><circle cx="66" cy="693.3" r="1.100" fill="#dcdde0"/>
<path d="M93.700 689.1h2.800l4.300-3.800v12.400l-4.300-3.800h-2.800z" fill="none" stroke="#dcdde0" stroke-width="1.300" stroke-linejoin="round"/><path d="M103.100 688.9a3.600 3.600 0 0 1 0 5.200M105.300 687.1a6.400 6.400 0 0 1 0 8.800" fill="none" stroke="#dcdde0" stroke-width="1.200" stroke-linecap="round"/>
<path d="M127.700 691.5c2-3.300 4.400-4.900 7-4.900s5 1.600 7 4.900c-2 3.300-4.400 4.900-7 4.900s-5-1.600-7-4.900z" fill="none" stroke="#dcdde0" stroke-width="1.400" stroke-linejoin="round"/><circle cx="134.700" cy="691.5" r="2.700" fill="#dcdde0"/>
<rect x="12" y="771.9" width="12.500" height="10.200" rx="1" fill="#dcdde0"/><path d="M16.300 774.1v5.800l4.700-2.900z" fill="#23272b"/>
<rect x="60.400" y="774.9" width="11.200" height="8" rx="1" fill="none" stroke="#dcdde0" stroke-width="1.400"/><path d="M62.300 774.9v-2.200a3.700 3.700 0 0 1 7.200-1.300" fill="none" stroke="#dcdde0" stroke-width="1.400" stroke-linecap="round"/><circle cx="66" cy="778.8" r="1.100" fill="#dcdde0"/>
<path d="M93.700 774.6h2.800l4.300-3.800v12.400l-4.300-3.800h-2.800z" fill="none" stroke="#dcdde0" stroke-width="1.300" stroke-linejoin="round"/><path d="M103.100 774.4a3.600 3.600 0 0 1 0 5.200M105.300 772.6a6.400 6.400 0 0 1 0 8.800" fill="none" stroke="#dcdde0" stroke-width="1.200" stroke-linecap="round"/>
<path d="M127.700 777.0c2-3.300 4.400-4.900 7-4.900s5 1.600 7 4.900c-2 3.300-4.400 4.900-7 4.900s-5-1.600-7-4.900z" fill="none" stroke="#dcdde0" stroke-width="1.400" stroke-linejoin="round"/><circle cx="134.700" cy="777.0" r="2.700" fill="#dcdde0"/>
<path d="M17 843.5l6.800-1.500v2.300l-6.800 1.500z" fill="#dcdde0"/><path d="M17.400 844.2v6.800M23.400 842.7v6.800" stroke="#dcdde0" stroke-width="1.300"/><ellipse cx="15.700" cy="851.3" rx="2.200" ry="1.800" fill="#dcdde0"/><ellipse cx="21.700" cy="849.8" rx="2.200" ry="1.800" fill="#dcdde0"/>
<rect x="60.400" y="845.7" width="11.200" height="8" rx="1" fill="none" stroke="#dcdde0" stroke-width="1.400"/><path d="M62.300 845.7v-2.200a3.700 3.700 0 0 1 7.200-1.300" fill="none" stroke="#dcdde0" stroke-width="1.400" stroke-linecap="round"/><circle cx="66" cy="849.6" r="1.100" fill="#dcdde0"/>
<path d="M93.700 845.4h2.800l4.300-3.800v12.400l-4.300-3.800h-2.800z" fill="none" stroke="#dcdde0" stroke-width="1.300" stroke-linejoin="round"/><path d="M103.100 845.2a3.600 3.600 0 0 1 0 5.200M105.300 843.4a6.400 6.400 0 0 1 0 8.800" fill="none" stroke="#dcdde0" stroke-width="1.200" stroke-linecap="round"/>
<path d="M17 898.4l6.800-1.500v2.300l-6.800 1.500z" fill="#dcdde0"/><path d="M17.400 899.1v6.800M23.400 897.6v6.800" stroke="#dcdde0" stroke-width="1.300"/><ellipse cx="15.700" cy="906.2" rx="2.200" ry="1.800" fill="#dcdde0"/><ellipse cx="21.700" cy="904.7" rx="2.200" ry="1.800" fill="#dcdde0"/>
<rect x="60.400" y="900.6" width="11.200" height="8" rx="1" fill="none" stroke="#dcdde0" stroke-width="1.400"/><path d="M62.300 900.6v-2.200a3.700 3.700 0 0 1 7.200-1.300" fill="none" stroke="#dcdde0" stroke-width="1.400" stroke-linecap="round"/><circle cx="66" cy="904.5" r="1.100" fill="#dcdde0"/>
<path d="M93.700 900.3h2.800l4.300-3.800v12.400l-4.300-3.800h-2.800z" fill="none" stroke="#dcdde0" stroke-width="1.300" stroke-linejoin="round"/><path d="M103.100 900.1a3.600 3.600 0 0 1 0 5.200M105.300 898.3a6.400 6.400 0 0 1 0 8.800" fill="none" stroke="#dcdde0" stroke-width="1.200" stroke-linecap="round"/>
</svg>
<div class="tnum" style="top:55.7px">4</div>
<div class="tnum" style="top:125.7px">3</div>
<div class="tnum" style="top:196.2px">2</div>
<div class="tnum" style="top:281.7px">1</div>
<div class="tnum" style="top:352.5px">1</div>
<div class="tnum" style="top:407.4px">2</div>
<!--HD-END-->
</div>

</body>
</html>
